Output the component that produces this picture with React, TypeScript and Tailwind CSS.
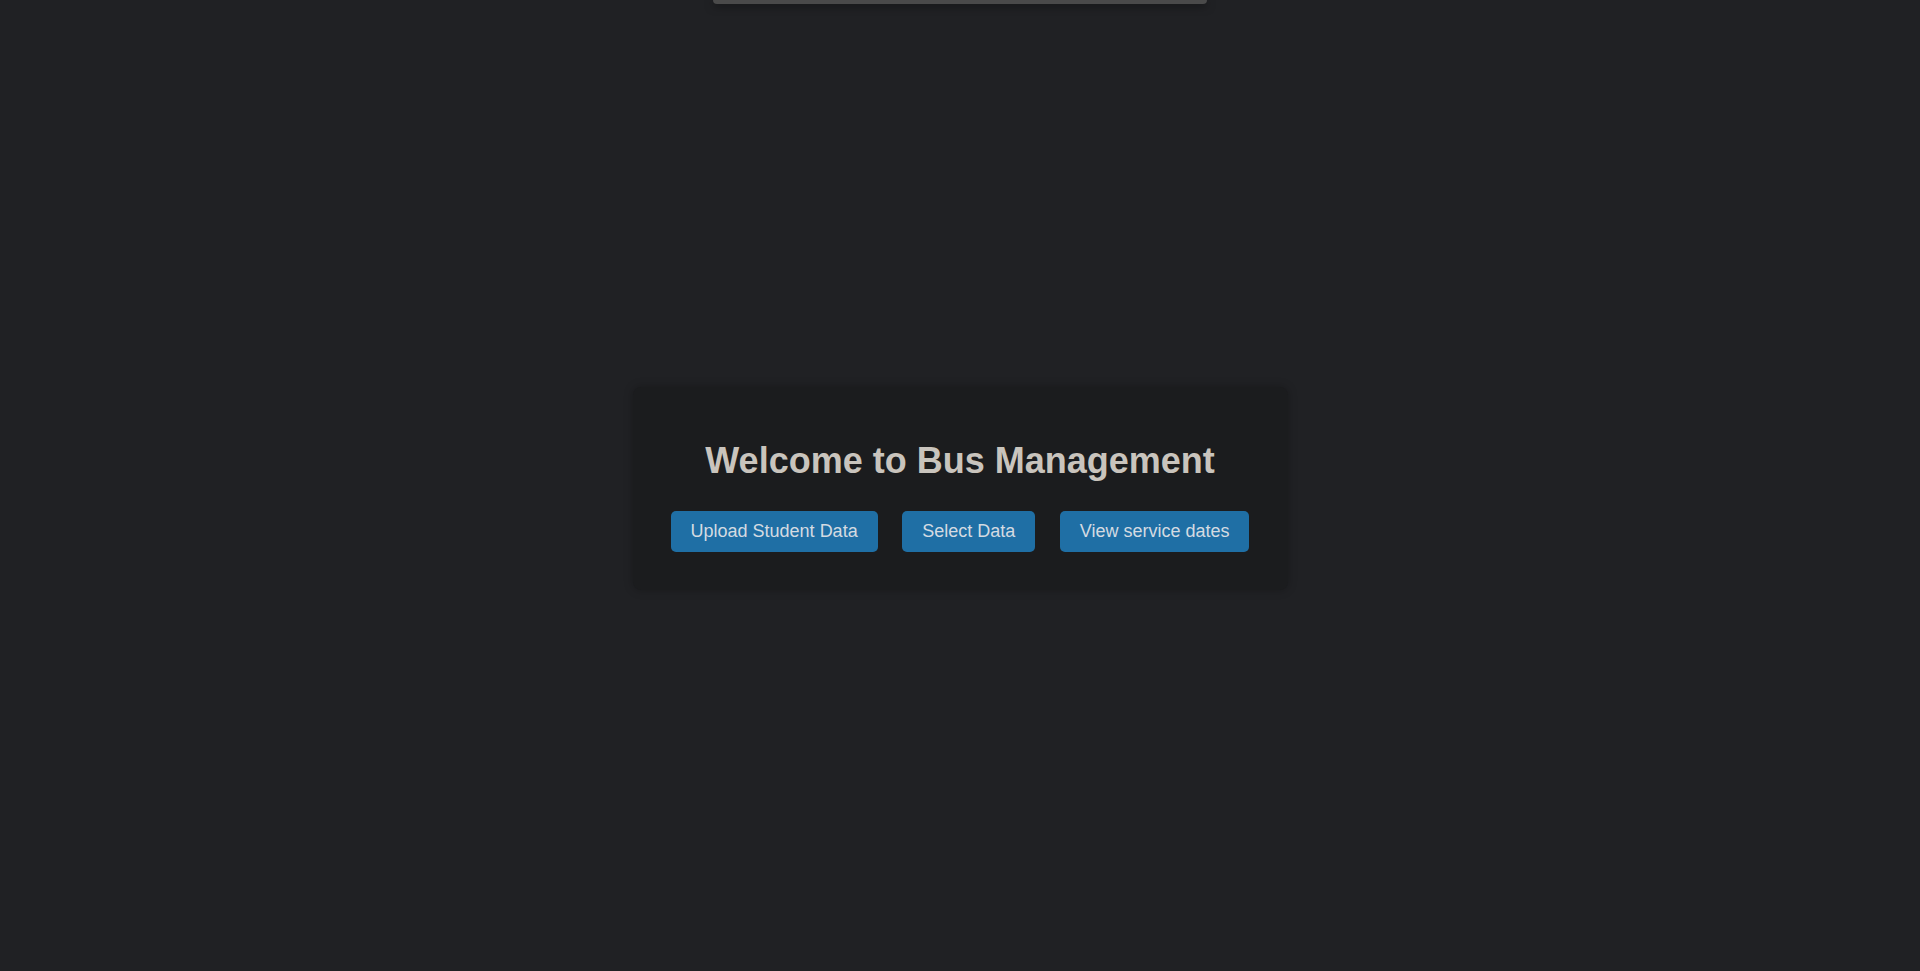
const buttons = ["Upload Student Data", "Select Data", "View service dates"];

export default function App() {
  return (
    <div className="min-h-screen flex flex-col bg-[#202124] font-['Liberation_Sans',Arial,sans-serif]">
      {/* panel peeking in from above */}
      <div className="mx-auto h-[4px] w-[494px] rounded-b-[10px] bg-[#4a4a4a] shadow-[0_2px_8px_rgba(0,0,0,0.5)]" />

      <div className="flex-1 flex items-center justify-center pt-[2px]">
        <div className="w-[655px] rounded-lg bg-[#1b1c1e] pt-[54px] pb-[38px] shadow-[0_0_10px_rgba(0,0,0,0.25)] flex flex-col items-center">
          <h1 className="text-[36px] leading-[40px] font-bold text-[#c9c4bd]">
            Welcome to Bus Management
          </h1>
          <div className="mt-[30px] flex gap-[24.5px]">
            {buttons.map((b) => (
              <button
                key={b}
                className="h-[41px] px-[20px] rounded-[5px] bg-[#1f6fa5] text-[18px] leading-[21px] text-[#d4dbe2]"
              >
                {b}
              </button>
            ))}
          </div>
        </div>
      </div>
    </div>
  );
}
